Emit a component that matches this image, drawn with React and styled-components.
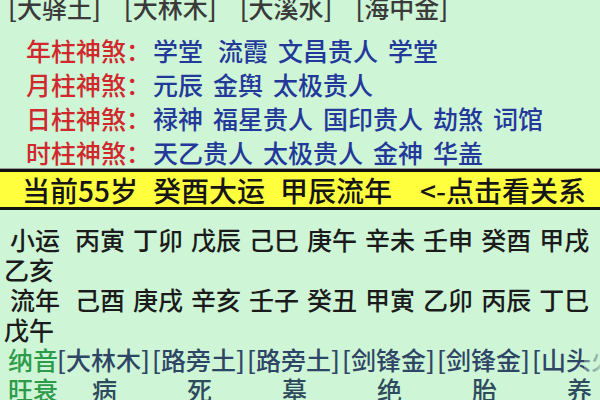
import React from 'react';
import styled, { createGlobalStyle } from 'styled-components';

const BG = '#cdf5d6';
const RED = '#d0282c';
const BLUE = '#23399a';
const GREEN = '#2e9b4b';

const GlobalStyle = createGlobalStyle`
  html, body {
    margin: 0;
    padding: 0;
    background: ${BG};
  }
  body {
    font-family: "Noto Sans CJK SC", "Noto Sans", sans-serif;
    font-weight: 500;
  }
`;

const Page = styled.div`
  width: 600px;
  height: 400px;
  overflow: hidden;
  background: ${BG};
`;

const TopRow = styled.div`
  display: flex;
  gap: 23px;
  margin-top: -10px;
  padding-left: 8px;
  height: 35px;
  line-height: 35px;
  font-size: 25px;
  color: #3a3a3a;
  white-space: nowrap;
`;

const ShenshaList = styled.div`
  padding: 8px 0 0 26px;
`;

const ShenshaRow = styled.div`
  display: flex;
  height: 34px;
  line-height: 34px;
  font-size: 25px;
  white-space: nowrap;
`;

const ShenshaLabel = styled.span`
  color: ${RED};
  width: 127px;
  flex-shrink: 0;
`;

const ShenshaValues = styled.span`
  display: flex;
  gap: 10px;
  color: ${BLUE};
`;

const Star = styled.span`
  margin-right: ${p => (p.$wide ? 5 : 0)}px;
`;

const LuckBar = styled.div`
  display: flex;
  align-items: center;
  height: 35px;
  background: #ffff3e;
  border-top: 3px solid #111;
  border-bottom: 3px solid #111;
  box-shadow: 0 -1px 0 #9a9a9a;
  padding-left: 22px;
  font-size: 28px;
  color: #151515;
  white-space: nowrap;
`;

const BarPart = styled.span`
  margin-right: ${p => p.$gap}px;
`;

const Section = styled.div`
  padding-top: 14px;
`;

const YearRow = styled.div`
  display: flex;
  flex-wrap: wrap;
  column-gap: 8px;
  padding: 0 4px;
  font-size: 25px;
  line-height: 30px;
  color: #1b1b1b;
`;

const YearLabel = styled.span`
  margin-left: 6px;
  margin-right: 7px;
`;

const ColumnRow = styled.div`
  position: relative;
  display: grid;
  grid-template-columns: 49px repeat(6, 95px);
  padding-left: 8px;
  font-size: 25px;
  line-height: 30px;
  white-space: nowrap;
  color: ${p => (p.$centered ? '#2d4b5c' : '#2f4565')};
  justify-items: ${p => (p.$centered ? 'center' : 'start')};
  ${p => p.$fade && `
    &::after {
      content: '';
      position: absolute;
      top: 0;
      right: 0;
      width: 16px;
      height: 100%;
      background: linear-gradient(to right, rgba(205, 245, 214, 0.3), rgba(205, 245, 214, 0.75));
    }
  `}
`;

const GreenLabel = styled.span`
  color: ${GREEN};
  justify-self: start;
`;

const nayinTop = ['[大驿土]', '[大林木]', '[大溪水]', '[海中金]'];

const shensha = [
  { label: '年柱神煞：', stars: [['学堂', true], ['流霞'], ['文昌贵人'], ['学堂']] },
  { label: '月柱神煞：', stars: [['元辰'], ['金舆'], ['太极贵人']] },
  { label: '日柱神煞：', stars: [['禄神'], ['福星贵人'], ['国印贵人'], ['劫煞'], ['词馆']] },
  { label: '时柱神煞：', stars: [['天乙贵人'], ['太极贵人'], ['金神'], ['华盖']] },
];

const xiaoyun = ['丙寅', '丁卯', '戊辰', '己巳', '庚午', '辛未', '壬申', '癸酉', '甲戌', '乙亥'];
const liunian = ['己酉', '庚戌', '辛亥', '壬子', '癸丑', '甲寅', '乙卯', '丙辰', '丁巳', '戊午'];
const nayin = ['[大林木]', '[路旁土]', '[路旁土]', '[剑锋金]', '[剑锋金]', '[山头火]'];
const wangshuai = ['病', '死', '墓', '绝', '胎', '养'];

export default function App() {
  return (
    <Page>
      <GlobalStyle />
      <TopRow>
        {nayinTop.map((n, i) => <span key={i}>{n}</span>)}
      </TopRow>
      <ShenshaList>
        {shensha.map(row => (
          <ShenshaRow key={row.label}>
            <ShenshaLabel>{row.label}</ShenshaLabel>
            <ShenshaValues>
              {row.stars.map(([s, wide], i) => <Star key={i} $wide={wide}>{s}</Star>)}
            </ShenshaValues>
          </ShenshaRow>
        ))}
      </ShenshaList>
      <LuckBar>
        <BarPart $gap={15}>当前55岁</BarPart>
        <BarPart $gap={15}>癸酉大运</BarPart>
        <BarPart $gap={28}>甲辰流年</BarPart>
        <BarPart $gap={0}>&lt;-点击看关系</BarPart>
      </LuckBar>
      <Section>
        <YearRow>
          <YearLabel>小运</YearLabel>
          {xiaoyun.map((g, i) => <span key={i}>{g}</span>)}
        </YearRow>
        <YearRow>
          <YearLabel>流年</YearLabel>
          {liunian.map((g, i) => <span key={i}>{g}</span>)}
        </YearRow>
        <ColumnRow $fade>
          <GreenLabel>纳音</GreenLabel>
          {nayin.map((n, i) => <span key={i}>{n}</span>)}
        </ColumnRow>
        <ColumnRow $centered>
          <GreenLabel>旺衰</GreenLabel>
          {wangshuai.map((w, i) => <span key={i}>{w}</span>)}
        </ColumnRow>
      </Section>
    </Page>
  );
}
